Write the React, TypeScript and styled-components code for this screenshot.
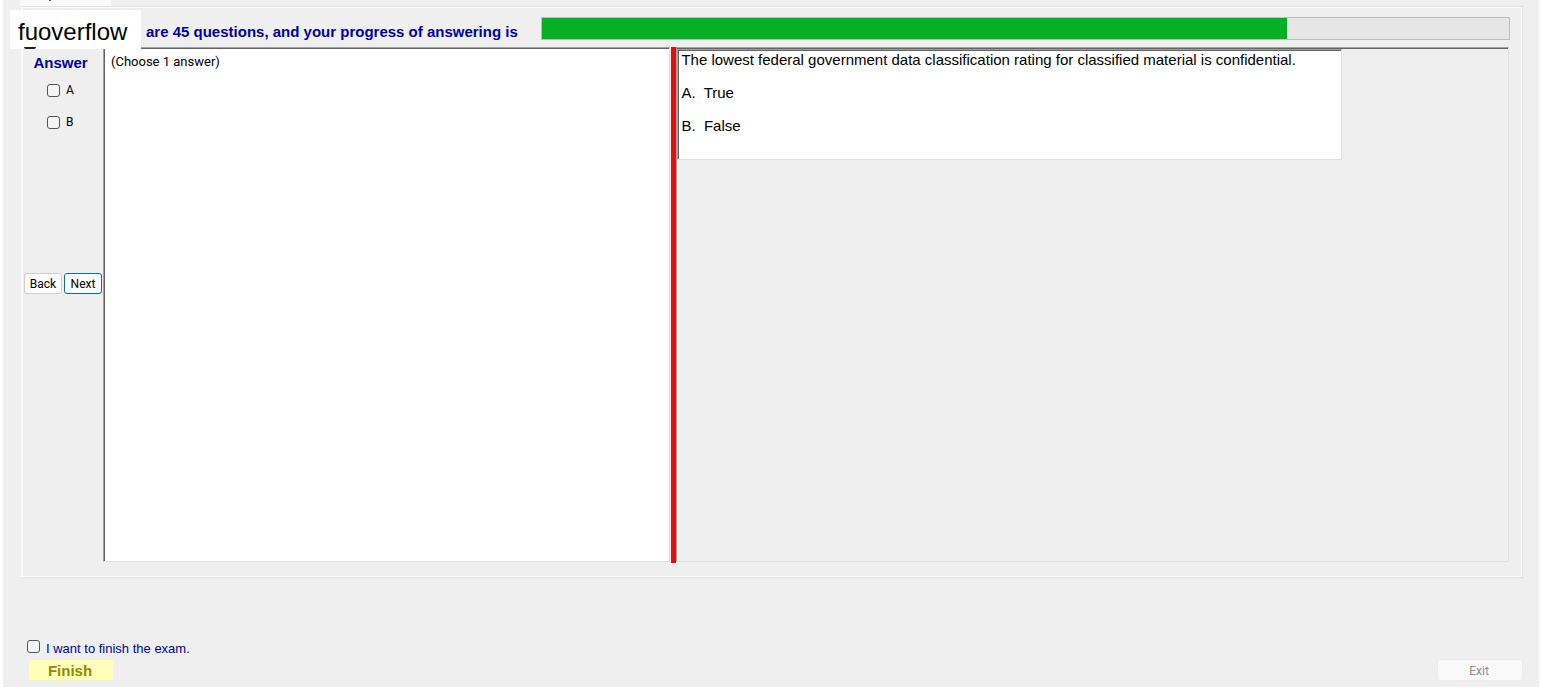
import React from "react";
import styled, { createGlobalStyle } from "styled-components";

const arial = `"Liberation Sans", Arial, sans-serif`;
const ui = `Roboto, "Segoe UI", sans-serif`;

const GlobalStyle = createGlobalStyle`
  *, *::before, *::after { box-sizing: border-box; }
  body { margin: 0; background: #fff; color: #000; font-family: ${arial}; }
`;

const Window = styled.div`
  display: flex;
  flex-direction: column;
  min-height: calc(100vh - 3px);
  margin: 0 3px;
  padding: 0 16px 6px 17px;
  background: #efefef;
`;

const TabStrip = styled.div`
  display: flex;
  height: 6px;
`;

const Tab = styled.div`
  width: 91px;
  background: #fafafa;
  &::after {
    content: "";
    display: block;
    width: 2px;
    height: 1px;
    margin-left: 29px;
    background: #555;
  }
`;

const Panel = styled.main`
  flex: 1;
  display: flex;
  flex-direction: column;
  margin-left: 1px;
  padding: 0 13px 15px 0;
  border: 1px solid #e2e2e2;
  border-left: 2px solid #fafafa;
  box-shadow: inset 0 1px #fafafa, inset -1px -1px #fafafa;
`;

const Header = styled.header`
  display: flex;
  align-items: flex-start;
  gap: 15px;
  height: 40px;
  padding: 10px 0 0 123px;
`;

const ProgressText = styled.span`
  width: 380px;
  flex: none;
  font: bold 15px/30px ${arial};
  color: #0000a4;
  white-space: nowrap;
`;

const Track = styled.div`
  flex: 1;
  height: 23px;
  margin-right: -1px;
  border: 1px solid #bcbcbc;
  background: #e6e6e6;
`;

const Fill = styled.div`
  height: 100%;
  background: #06b025;
`;

const Watermark = styled.div`
  position: absolute;
  top: 10px;
  left: 10px;
  width: 131px;
  height: 39px;
  padding-left: 8px;
  background: #fff;
  font: 24px/44px ${arial};
  &::after {
    content: "";
    position: absolute;
    left: 14px;
    bottom: 0;
    width: 12px;
    height: 2px;
    border-radius: 0 0 6px 6px;
    background: #222;
  }
`;

const Workspace = styled.div`
  flex: 1;
  display: grid;
  grid-template-columns: 80px 567fr 6px 832fr;
`;

const Sidebar = styled.aside`
  display: flex;
  flex-direction: column;
`;

const AnswerTitle = styled.h2`
  margin: 0 0 10px;
  padding-right: 5px;
  font: bold 15px/32px ${arial};
  text-align: center;
  color: #0000a4;
`;

const Box = styled.input`
  appearance: none;
  flex: none;
  width: 13px;
  height: 13px;
  margin: 0;
  border: 1px solid #555;
  border-radius: 3px;
  background: #f5f5f5;
  &:checked { background: #0067b8; }
`;

const Choice = styled.label`
  display: flex;
  align-items: center;
  gap: 6px;
  height: 16px;
  margin: -7px 0 23px;
  padding-left: 24px;
  font: 12px/16px ${ui};
`;

const Nav = styled.nav`
  display: flex;
  gap: 2px;
  margin-top: 120px;
  padding-left: 1px;
`;

const NavButton = styled.button<{ $focus?: boolean }>`
  width: 38px;
  height: 21px;
  padding: 0;
  border: 1px solid ${(p) => (p.$focus ? "#0a6ea0" : "#d0d0d0")};
  border-radius: 3px;
  background: #fdfdfd;
  font: 12px/16px ${ui};
  color: #000;
`;

const Sunken = styled.section`
  border: 1px solid #e0e0e0;
  border-top-color: #a0a0a0;
  border-left-color: #a0a0a0;
  box-shadow: inset 1px 1px #646464;
`;

const AnswerPane = styled(Sunken)`
  padding: 6px 7px;
  background: #fff;
  font: 13px/16px ${ui};
`;

const Splitter = styled.div`
  margin: 0 0 -1px 1px;
  background: #e60d0d;
`;

const QuestionPane = styled(Sunken)`
  padding-top: 1px;
  box-shadow: inset 0 1px #646464;
`;

const Question = styled(Sunken)`
  width: 80%;
  min-height: 111px;
  padding: 1px 3px;
  background: #fff;
  font: 15px/17px ${arial};
  p { margin: 0 0 16px; white-space: pre-wrap; }
`;

const Footer = styled.footer`
  display: flex;
  justify-content: space-between;
  align-items: flex-end;
  margin-top: 60px;
`;

const FinishArea = styled.div`
  padding: 0 0 0 7px;
`;

const FinishLabel = styled.label`
  display: flex;
  gap: 6px;
  height: 21px;
  padding-top: 2px;
  font: 13px/18px ${arial};
  color: #0000a4;
`;

const FooterButton = styled.button<{ $accent?: boolean }>`
  display: block;
  width: 86px;
  height: 22px;
  margin-left: 1px;
  border: 1px solid ${(p) => (p.$accent ? "#f1f1e0" : "#ebebeb")};
  border-radius: 3px;
  background: ${(p) => (p.$accent ? "#ffffb9" : "#f9f9f9")};
  color: ${(p) => (p.$accent ? "#8c8c08" : "#8d8d8d")};
  font: ${(p) => (p.$accent ? `bold 15px/20px ${arial}` : `12px/20px ${ui}`)};
  padding: 1px 2px 0 0;
`;

export default function App() {
  const progress = 77;
  return (
    <>
      <GlobalStyle />
      <Window>
        <TabStrip><Tab /></TabStrip>
        <Panel>
          <Header>
            <ProgressText>are 45 questions, and your progress of answering is</ProgressText>
            <Track role="progressbar" aria-label="Progress" aria-valuenow={progress}>
              <Fill style={{ width: `${progress}%` }} />
            </Track>
          </Header>
          <Workspace>
            <Sidebar>
              <AnswerTitle>Answer</AnswerTitle>
              {["A", "B"].map((c) => (
                <Choice key={c}><Box type="checkbox" />{c}</Choice>
              ))}
              <Nav>
                <NavButton type="button">Back</NavButton>
                <NavButton type="button" $focus>Next</NavButton>
              </Nav>
            </Sidebar>
            <AnswerPane>(Choose 1 answer)</AnswerPane>
            <Splitter />
            <QuestionPane>
              <Question>
                <p>The lowest federal government data classification rating for classified material is confidential.</p>
                <p>{"A.  True"}</p>
                <p>{"B.  False"}</p>
              </Question>
            </QuestionPane>
          </Workspace>
        </Panel>
        <Footer>
          <FinishArea>
            <FinishLabel><Box type="checkbox" />I want to finish the exam.</FinishLabel>
            <FooterButton type="button" $accent>Finish</FooterButton>
          </FinishArea>
          <FooterButton type="button" disabled>Exit</FooterButton>
        </Footer>
      </Window>
      <Watermark>fuoverflow</Watermark>
    </>
  );
}
